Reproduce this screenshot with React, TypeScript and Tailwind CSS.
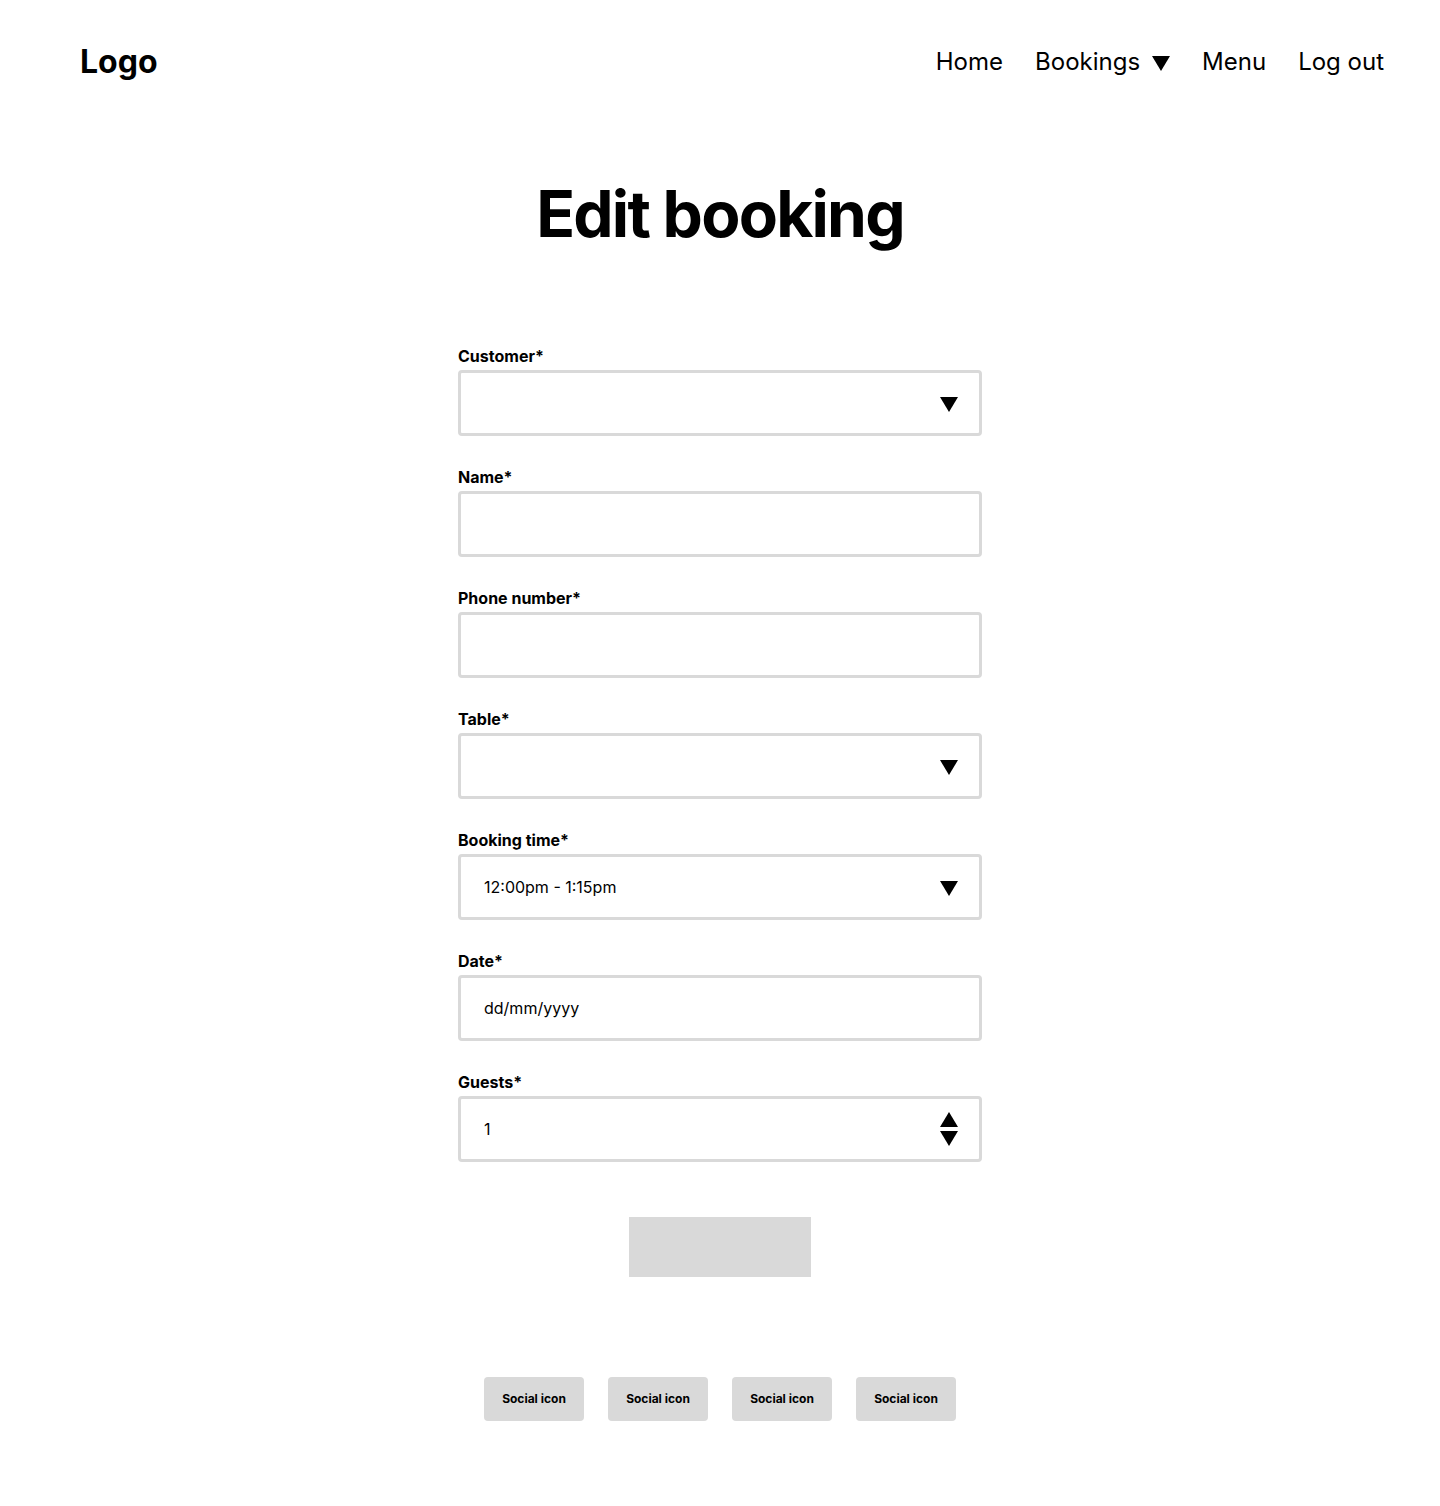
import React from 'react';

const Caret = ({ up = false, className = '' }: { up?: boolean; className?: string }) => (
  <svg width="18" height="15" viewBox="0 0 18 15" className={className} aria-hidden>
    {up ? <polygon points="9,0 18,15 0,15" fill="#000" /> : <polygon points="0,0 18,0 9,15" fill="#000" />}
  </svg>
);

type Field = {
  label: string;
  value?: string;
  kind: 'text' | 'select' | 'number';
};

const fields: Field[] = [
  { label: 'Customer*', kind: 'select' },
  { label: 'Name*', kind: 'text' },
  { label: 'Phone number*', kind: 'text' },
  { label: 'Table*', kind: 'select' },
  { label: 'Booking time*', kind: 'select', value: '12:00pm - 1:15pm' },
  { label: 'Date*', kind: 'text', value: 'dd/mm/yyyy' },
  { label: 'Guests*', kind: 'number', value: '1' },
];

const FormField = ({ field }: { field: Field }) => (
  <div className="flex flex-col gap-[2px]">
    <label className="text-[16px] leading-[24px] font-bold text-black">{field.label}</label>
    <div className="h-[66px] w-full border-[3px] border-[#d9d9d9] rounded-[4px] flex items-center justify-between pl-[23px] pr-[21px]">
      <span className="text-[16px] text-black">{field.value ?? ''}</span>
      {field.kind === 'select' && <Caret className="mt-[2px]" />}
      {field.kind === 'number' && (
        <div className="flex flex-col gap-[4px]">
          <Caret up />
          <Caret />
        </div>
      )}
    </div>
  </div>
);

const App = () => {
  return (
    <div className="min-h-[1506px] bg-white text-black font-['Inter',sans-serif]">
      <header className="h-[124px] flex items-center justify-between pl-[80px] pr-[56px]">
        <span className="text-[32px] font-bold">Logo</span>
        <nav className="flex items-center gap-[32px] text-[24px]">
          <a>Home</a>
          <a className="flex items-center gap-[12px]">
            Bookings
            <Caret className="mt-[3px]" />
          </a>
          <a>Menu</a>
          <a>Log out</a>
        </nav>
      </header>

      <main className="flex flex-col items-center">
        <h1 className="mt-[58px] text-[64px] leading-[64px] font-bold tracking-[-1.75px]">Edit booking</h1>

        <form className="mt-[98px] w-[524px] flex flex-col gap-[29px]">
          {fields.map(f => (
            <FormField key={f.label} field={f} />
          ))}
        </form>

        <button className="mt-[55px] w-[182px] h-[60px] bg-[#d9d9d9]" />

        <div className="mt-[100px] flex gap-[24px]">
          {[0, 1, 2, 3].map(i => (
            <div
              key={i}
              className="w-[100px] h-[44px] bg-[#d9d9d9] rounded-[4px] flex items-center justify-center text-[12px] font-bold"
            >
              Social icon
            </div>
          ))}
        </div>
      </main>
    </div>
  );
};

export default App;
